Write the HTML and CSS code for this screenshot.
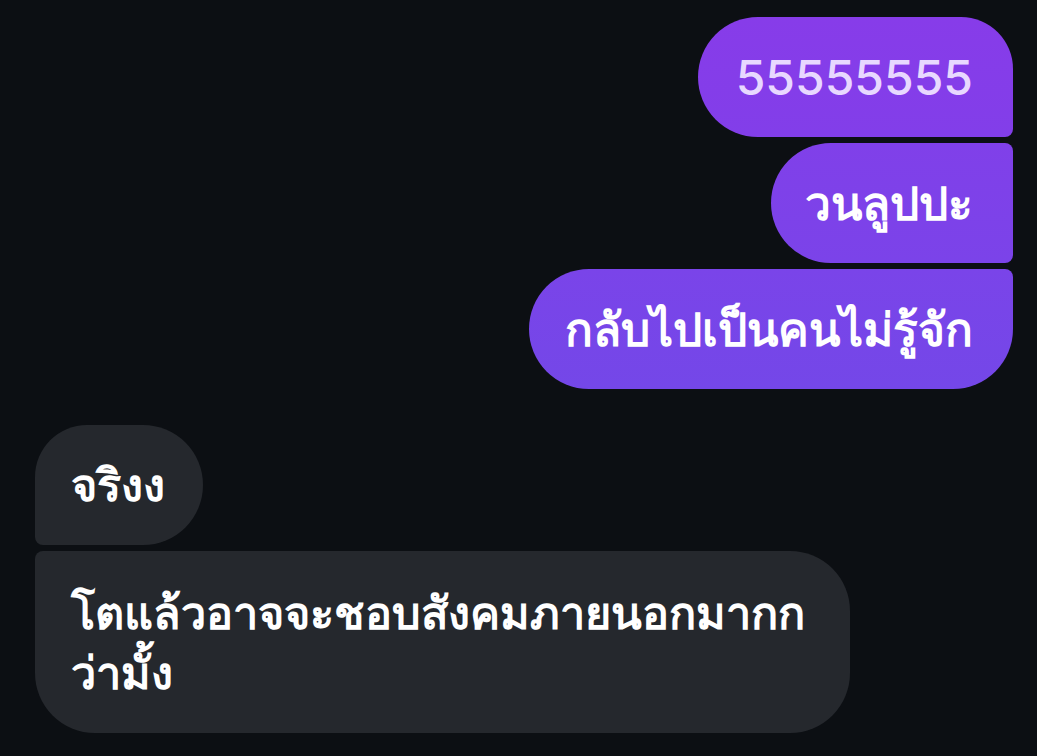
FILE: index.html
```html
<!DOCTYPE html>
<html lang="th">
<head>
<meta charset="utf-8">
<link rel="stylesheet" href="styles.css">
</head>
<body>
<div class="chat">
  <div class="group out">
    <div class="bubble out first num">55555555</div>
    <div class="bubble out mid">วนลูปปะ</div>
    <div class="bubble out last">กลับไปเป็นคนไม่รู้จัก</div>
  </div>
  <div class="group in">
    <div class="bubble in first">จริงง</div>
    <div class="bubble in last long">โตแล้วอาจจะชอบสังคมภายนอกมากก<br>ว่ามั้ง</div>
  </div>
</div>
</body>
</html>
```
FILE: styles.css
```css
html, body {
  margin: 0;
  padding: 0;
  background: #0c0f13;
  width: 1037px;
  height: 756px;
  overflow: hidden;
}
.chat {
  display: flex;
  flex-direction: column;
  gap: 36px;
  padding: 17px 24px 0 35px;
  font-family: "Noto Sans", "DejaVu Sans", sans-serif;
}
.group {
  display: flex;
  flex-direction: column;
  gap: 6px;
}
.group.out { align-items: flex-end; }
.group.in { align-items: flex-start; }
.bubble {
  box-sizing: border-box;
  height: 120px;
  display: flex;
  align-items: center;
  padding: 0 40px 0 36px;
  font-size: 46px;
  font-weight: 700;
  color: #ffffff;
  white-space: nowrap;
}
.bubble.out.first {
  border-radius: 60px 52px 8px 60px;
  background: linear-gradient(180deg, #873ce9 0%, #823ee9 100%);
}
.bubble.out.mid {
  border-radius: 60px 8px 8px 60px;
  background: linear-gradient(180deg, #8040e9 0%, #7b43e9 100%);
  padding-left: 34px;
}
.bubble.out.last {
  border-radius: 60px 8px 60px 60px;
  background: linear-gradient(180deg, #7a44e9 0%, #7447e8 100%);
}
.bubble.num {
  font-family: Inter, sans-serif;
  font-weight: 500;
  font-size: 48px;
  color: #e8d8ff;
  padding: 0 40px 0 38px;
}
.bubble.in {
  background: #25282d;
  padding: 0 40px 0 36px;
}
.bubble.in.first {
  border-radius: 52px 60px 60px 8px;
  font-size: 45px;
  padding-right: 38px;
}
.bubble.in.last {
  border-radius: 8px 60px 60px 60px;
  height: 182px;
  width: 815px;
  font-size: 45px;
  white-space: normal;
  line-height: 60px;
}
```
